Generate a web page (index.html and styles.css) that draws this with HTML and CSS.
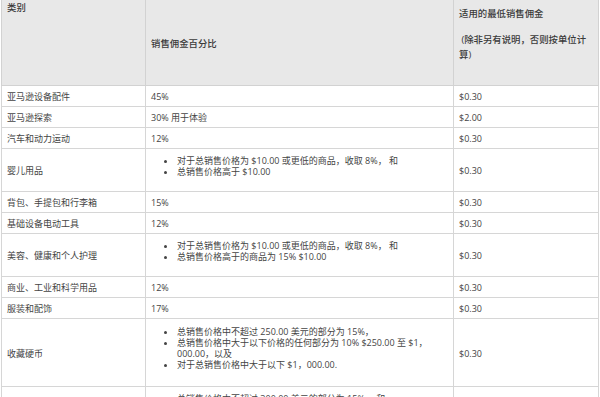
FILE: index.html
```html
<!DOCTYPE html>
<html lang="zh-CN">
<head>
<meta charset="utf-8">
<title>销售佣金</title>
<link rel="stylesheet" href="styles.css">
</head>
<body>
<table class="fees">
  <colgroup>
    <col class="c1"><col class="c2"><col class="c3">
  </colgroup>
  <thead>
    <tr class="head">
      <th class="h-cat">类别</th>
      <th class="h-pct">销售佣金百分比</th>
      <th class="h-min">
        <p class="h-p1">适用的最低销售佣金</p>
        <p class="h-p2">&nbsp;(除非另有说明，否则按单位计算)</p>
      </th>
    </tr>
  </thead>
  <tbody>
    <tr><td>亚马逊设备配件</td><td>45%</td><td>$0.30</td></tr>
    <tr><td>亚马逊探索</td><td>30% 用于体验</td><td>$2.00</td></tr>
    <tr><td>汽车和动力运动</td><td>12%</td><td>$0.30</td></tr>
    <tr>
      <td>婴儿用品</td>
      <td><ul><li>对于总销售价格为 $10.00 或更低的商品，收取 8%， 和</li><li>总销售价格高于 $10.00</li></ul></td>
      <td>$0.30</td>
    </tr>
    <tr><td>背包、手提包和行李箱</td><td>15%</td><td>$0.30</td></tr>
    <tr><td>基础设备电动工具</td><td>12%</td><td>$0.30</td></tr>
    <tr>
      <td>美容、健康和个人护理</td>
      <td><ul><li>对于总销售价格为 $10.00 或更低的商品，收取 8%， 和</li><li>总销售价格高于的商品为 15% $10.00</li></ul></td>
      <td>$0.30</td>
    </tr>
    <tr><td>商业、工业和科学用品</td><td>12%</td><td>$0.30</td></tr>
    <tr><td>服装和配饰</td><td>17%</td><td>$0.30</td></tr>
    <tr>
      <td>收藏硬币</td>
      <td><ul class="long"><li>总销售价格中不超过 250.00 美元的部分为 15%，</li><li>总销售价格中大于以下价格的任何部分为 10% $250.00 至 $1，<br>000.00，以及</li><li>对于总销售价格中大于以下 $1，000.00.</li></ul></td>
      <td>$0.30</td>
    </tr>
    <tr>
      <td>珠宝</td>
      <td><ul><li>总销售价格中不超过 300.00 美元的部分为 15%， 和</li><li>总销售价格中超过 300.00 美元的任何部分为 5%</li></ul></td>
      <td>$0.30</td>
    </tr>
  </tbody>
</table>
</body>
</html>
```
FILE: styles.css
```css
html, body {
  margin: 0;
  padding: 0;
  background: #ffffff;
}

body {
  font-family: "Open Sans", "Noto Sans CJK SC", sans-serif;
  font-size: 9px;
  line-height: 11px;
  color: #444444;
}

.fees {
  margin: -1px 0 0 1px;
  width: 597px;
  table-layout: fixed;
  border-collapse: collapse;
}

.c1 { width: 144px; }
.c2 { width: 308px; }
.c3 { width: 145px; }

.fees th,
.fees td {
  border: 1px solid #d6d6d6;
  padding: 5px 5px 4px 5px;
  text-align: left;
  vertical-align: middle;
}

.fees .head {
  height: 86px;
}

.fees th {
  background: #e8e8e8;
  color: #3a3a3a;
  font-weight: 500;
  font-size: 9.4px;
  border-color: #d2d2d2;
}

.fees .h-cat {
  vertical-align: top;
  padding-top: 2px;
}

.fees .h-pct {
  vertical-align: middle;
}

.fees .h-min {
  vertical-align: top;
  line-height: 15px;
  padding-top: 6px;
}

.fees .h-min p {
  margin: 0;
}

.fees .h-min .h-p1 {
  margin-bottom: 11px;
}

.fees ul {
  margin: 1px 0 10px 0;
  padding-left: 26px;
}

.fees ul.long {
  margin: 2px 0 12px 0;
}

.fees li {
  line-height: 11px;
}
```
